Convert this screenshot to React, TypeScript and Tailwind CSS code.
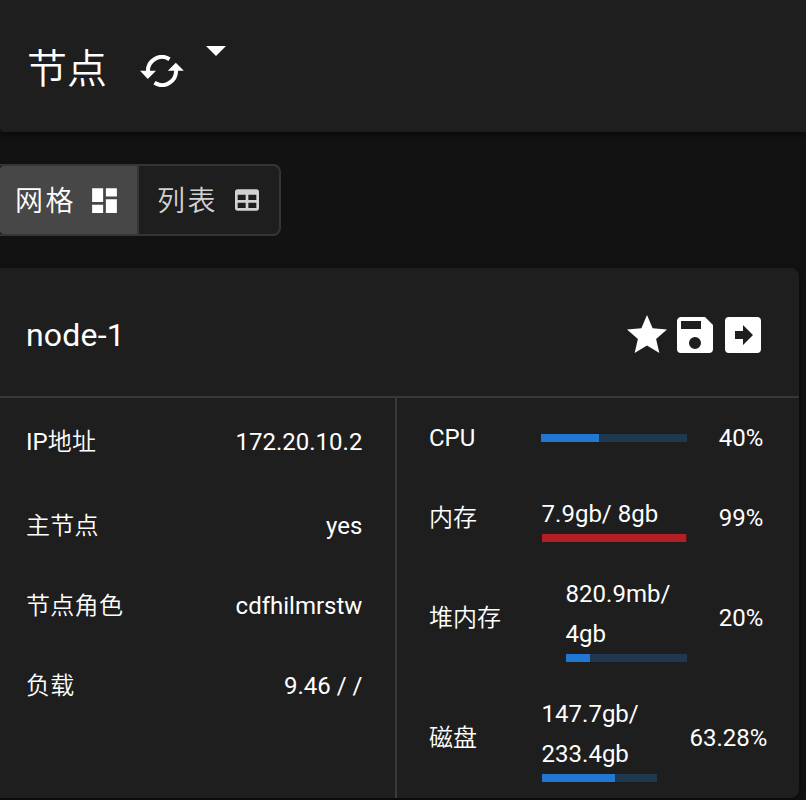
import React from "react";

type IconProps = { d: string; className: string };

function Icon({ d, className }: IconProps) {
  return (
    <svg viewBox="0 0 24 24" className={className} fill="currentColor">
      <path d={d} />
    </svg>
  );
}

const icons = {
  caret: "M7,10L12,15L17,10H7Z",
  grid: "M13,3V9H21V3M13,21H21V11H13M3,21H11V15H3M3,13H11V3H3V13Z",
  table:
    "M5,4H19A2,2 0 0,1 21,6V18A2,2 0 0,1 19,20H5A2,2 0 0,1 3,18V6A2,2 0 0,1 5,4M5,8V12H11V8H5M13,8V12H19V8H13M5,14V18H11V14H5M13,14V18H19V14H13Z",
  star: "M12,17.27L18.18,21L16.54,13.97L22,9.24L14.81,8.62L12,2L9.19,8.62L2,9.24L7.45,13.97L5.82,21L12,17.27Z",
  save: "M15,9H5V5H15M12,19A3,3 0 0,1 9,16A3,3 0 0,1 12,13A3,3 0 0,1 15,16A3,3 0 0,1 12,19M17,3H5C3.89,3 3,3.9 3,5V19A2,2 0 0,0 5,21H19A2,2 0 0,0 21,19V7L17,3Z",
  arrow:
    "M3,19V5A2,2 0 0,1 5,3H19A2,2 0 0,1 21,5V19A2,2 0 0,1 19,21H5A2,2 0 0,1 3,19M17,12L12,7V10H8V14H12V17L17,12Z",
};

const info = [
  { latin: "IP", label: "地址", value: "172.20.10.2", row: "h-[88px]" },
  { latin: "", label: "主节点", value: "yes", row: "h-20" },
  { latin: "", label: "节点角色", value: "cdfhilmrstw", row: "h-20" },
  { latin: "", label: "负载", value: "9.46 / /", row: "h-20" },
];

const usage = [
  { label: "CPU", weight: "font-normal", lines: [], pct: 40, text: "40%", row: "h-20", box: "ml-[112px] w-[146px]", value: "w-[108px]", fill: "bg-[#2277d2]", track: "bg-[#1f3850]" },
  { label: "内存", weight: "font-[350]", lines: ["7.9gb/ 8gb"], pct: 99.3, text: "99%", row: "h-20", box: "ml-[113px] w-[145px]", value: "w-[108px]", fill: "bg-[#b41f24]", track: "bg-[#4b1f21]" },
  { label: "堆内存", weight: "font-[350]", lines: ["820.9mb/", "4gb"], pct: 20, text: "20%", row: "h-[120px]", box: "ml-[137px] w-[121px]", value: "w-[108px]", fill: "bg-[#2277d2]", track: "bg-[#1f3850]" },
  { label: "磁盘", weight: "font-[350]", lines: ["147.7gb/", "233.4gb"], pct: 63.28, text: "63.28%", row: "h-[120px]", box: "ml-[113px] w-[115px]", value: "w-[142px] pl-px", fill: "bg-[#2277d2]", track: "bg-[#1f3850]" },
];

export default function App() {
  return (
    <div className="h-[800px] w-[806px] overflow-hidden bg-[#121212] font-['Roboto','Noto_Sans_CJK_SC',sans-serif] text-2xl leading-10 text-white">
      <header className="flex h-[132px] items-start rounded-bl bg-[#1e1e1e] pl-[27px] shadow-[0_3px_6px_rgba(0,0,0,0.5)]">
        <h1 className="mt-10 w-[113px] text-[40px] leading-[60px] font-[350]">节点</h1>
        <svg viewBox="0 0 44 32" className="mt-[55px] h-8 w-11" fill="none">
          <path d="M8 17A14 14 0 0 1 29.5 4.2M36 15A14 14 0 0 1 14.5 27.8" stroke="white" strokeWidth="4" />
          <path d="M0 15.7H16L7.8 24ZM27.8 15.7H43.8L35.8 7.7Z" fill="white" />
        </svg>
        <Icon d={icons.caret} className="mt-[26px] ml-2 size-12" />
      </header>

      <div className="mt-8 flex h-[72px] w-[281px] rounded-r-lg border-2 border-l-0 border-[#353535] bg-[#1e1e1e] text-[28px] tracking-[2.5px]">
        <button className="flex w-[139px] items-center rounded-l-[4px] border-r-2 border-[#353535] bg-[#474747] pl-[15px]">
          <span className="w-[73px] pt-[3px] text-left font-[350] tracking-[2.5px]">网格</span>
          <Icon d={icons.grid} className="size-[33px]" />
        </button>
        <button className="flex flex-1 items-center pl-[18px] text-[#d2d2d2]">
          <span className="w-[74px] pt-[3px] text-left font-[350] tracking-[2.5px]">列表</span>
          <Icon d={icons.table} className="size-8" />
        </button>
      </div>

      <section className="mt-8 flex h-[530px] w-[799px] flex-col rounded-r-lg bg-[#1e1e1e] shadow-[0_2px_5px_rgba(0,0,0,0.6)]">
        <div className="flex h-[130px] items-center justify-between border-b-2 border-[#383838] pr-8 pl-[26px] pt-1.5">
          <h2 className="text-[32px] tracking-[0.2px]">node-1</h2>
          <div className="flex">
            <Icon d={icons.star} className="size-12" />
            <Icon d={icons.save} className="size-12" />
            <Icon d={icons.arrow} className="size-12" />
          </div>
        </div>
        <div className="flex flex-1">
          <div className="w-[397px] shrink-0 border-r-2 border-[#383838] pr-[32.6px] pl-[26px]">
            {info.map((r) => (
              <div key={r.label} className={`flex items-center justify-between ${r.row}`}>
                <span>
                  {r.latin}
                  <span className="font-[350] tracking-[0.3px]">{r.label}</span>
                </span>
                <span>{r.value}</span>
              </div>
            ))}
          </div>
          <div className="w-[402px] pl-8">
            {usage.map((r) => (
              <div key={r.label} className={`flex items-center ${r.row}`}>
                <span className={`w-0 whitespace-nowrap ${r.weight}`}>{r.label}</span>
                <div className={r.box}>
                  {r.lines.map((l) => (
                    <div key={l} className="-ml-px whitespace-nowrap pl-[0.6px]">{l}</div>
                  ))}
                  <div className={`h-2 ${r.track}`}>
                    <div className={`h-full ${r.fill}`} style={{ width: `${r.pct}%` }} />
                  </div>
                </div>
                <span className={`text-center ${r.value}`}>{r.text}</span>
              </div>
            ))}
          </div>
        </div>
      </section>
    </div>
  );
}
